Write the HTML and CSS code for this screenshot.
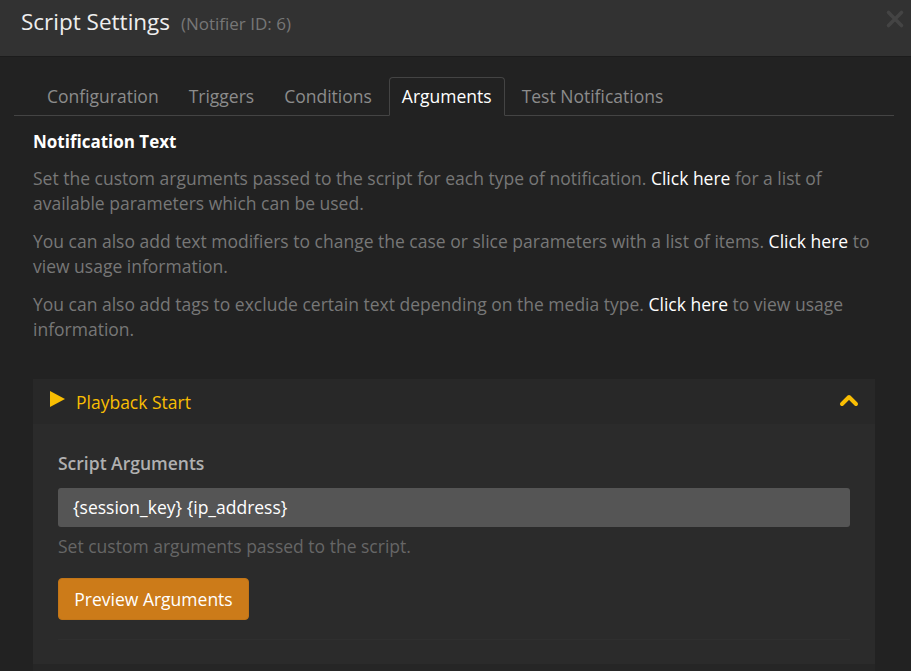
FILE: index.html
```html
<!DOCTYPE html>
<html>
<head>
<meta charset="utf-8">
<link rel="stylesheet" href="styles.css">
</head>
<body>
<div class="modal">
  <div class="modal-header">
    <h4 class="modal-title">Script Settings <small class="sub">(Notifier ID: 6)</small></h4>
    <button class="close" aria-label="Close">
      <svg width="20" height="20" viewBox="0 0 20 20"><path d="M3.5 3.5 L16.5 16.5 M16.5 3.5 L3.5 16.5" stroke="#444444" stroke-width="3.6" stroke-linecap="round"/></svg>
    </button>
  </div>
  <div class="modal-body">
    <ul class="tabs">
      <li class="tab">Configuration</li>
      <li class="tab">Triggers</li>
      <li class="tab">Conditions</li>
      <li class="tab active">Arguments</li>
      <li class="tab">Test Notifications</li>
    </ul>
    <div class="tab-content">
      <h5 class="section-title">Notification Text</h5>
      <p class="help">Set the custom arguments passed to the script for each type of notification. <a class="link">Click here</a> for a list of available parameters which can be used.</p>
      <p class="help">You can also add text modifiers to change the case or slice parameters with a list of items. <a class="link">Click here</a> to view usage information.</p>
      <p class="help">You can also add tags to exclude certain text depending on the media type. <a class="link">Click here</a> to view usage information.</p>

      <div class="panel">
        <div class="panel-heading">
          <div class="panel-title">
            <svg class="play" width="15" height="16" viewBox="0 0 15 16"><polygon points="0,0 15,8 0,16" fill="#f9be03"/></svg>
            <span>Playback Start</span>
          </div>
          <svg class="chev" width="20" height="14" viewBox="0 0 20 14"><polyline points="3,11 10,4 17,11" fill="none" stroke="#f9be03" stroke-width="4" stroke-linecap="round" stroke-linejoin="round"/></svg>
        </div>
        <div class="panel-body">
          <label class="field-label">Script Arguments</label>
          <div class="input">{session_key} {ip_address}</div>
          <p class="field-help">Set custom arguments passed to the script.</p>
          <button class="btn">Preview Arguments</button>
          <div class="rule"></div>
        </div>
        <div class="panel-foot"></div>
      </div>
    </div>
  </div>
</div>
</body>
</html>
```

FILE: styles.css
```css
html, body {
  margin: 0;
  padding: 0;
  background: #222222;
  font-family: "Open Sans", "Noto Sans", sans-serif;
  overflow: hidden;
}

.modal {
  width: 911px;
  height: 671px;
  background: #222222;
}

.modal-header {
  height: 57px;
  box-sizing: border-box;
  background: #323232;
  border-bottom: 1px solid #1c1c1c;
  display: flex;
  justify-content: space-between;
  align-items: flex-start;
  padding: 7px 6px 0 21px;
}

.modal-title {
  margin: 0;
  font-size: 22.5px;
  line-height: 30px;
  font-weight: 400;
  color: #eeeeee;
}

.sub {
  font-size: 17px;
  color: #777777;
  margin-left: 5px;
}

.close {
  background: none;
  border: 0;
  padding: 0;
  margin-top: 2px;
  cursor: pointer;
}

.modal-body {
  padding-top: 20px;
}

.tabs {
  list-style: none;
  margin: 0 17px 0 14px;
  padding: 0 0 0 20px;
  display: flex;
  border-bottom: 1px solid #444444;
}

.tab {
  height: 39px;
  box-sizing: border-box;
  padding: 0 12px;
  margin-right: 4px;
  margin-bottom: -1px;
  border: 1px solid transparent;
  border-radius: 4px 4px 0 0;
  font-size: 17.5px;
  line-height: 37px;
  color: #8c8c8c;
}

.tab.active {
  color: #ffffff;
  background: #222222;
  border-color: #444444;
  border-bottom-color: #222222;
}

.tab-content {
  padding: 0 36px 0 33px;
}

.section-title {
  margin: 14px 0 12px;
  font-size: 17px;
  line-height: 24px;
  font-weight: 700;
  color: #ffffff;
}

.help {
  margin: 0 0 13px;
  font-size: 17.5px;
  line-height: 25px;
  color: #777777;
}

.link {
  color: #ffffff;
}

.panel {
  margin-top: 37px;
  background: #2b2b2b;
}

.panel-heading {
  height: 45px;
  box-sizing: border-box;
  background: #282828;
  display: flex;
  align-items: center;
  justify-content: space-between;
  padding: 0 16px 0 17px;
}

.panel-title {
  display: flex;
  align-items: center;
  gap: 11px;
  font-size: 17.5px;
  color: #f9be03;
}

.play {
  margin-top: -6px;
}

.chev {
  margin-top: -4px;
}

.panel-body {
  padding: 27px 25px 24px;
}

.field-label {
  display: block;
  font-size: 17.5px;
  line-height: 24px;
  font-weight: 600;
  color: #b0b0b0;
  margin-bottom: 13px;
}

.input {
  height: 39px;
  box-sizing: border-box;
  background: #555555;
  border-radius: 3px;
  padding: 0 15px;
  font-size: 17.5px;
  line-height: 39px;
  color: #ffffff;
}

.field-help {
  margin: 7px 0 0;
  font-size: 17.5px;
  line-height: 25px;
  color: #666666;
}

.btn {
  display: block;
  margin-top: 19px;
  height: 42px;
  width: 191px;
  padding: 0;
  background: #cc7b19;
  border: 1px solid #c27517;
  border-radius: 4px;
  font-family: "Open Sans", "Noto Sans", sans-serif;
  font-size: 17.5px;
  color: #ffffff;
  cursor: pointer;
}

.rule {
  margin-top: 19px;
  height: 1px;
  background: #2f2f2f;
}

.panel-foot {
  height: 10px;
  background: #262626;
}
```
